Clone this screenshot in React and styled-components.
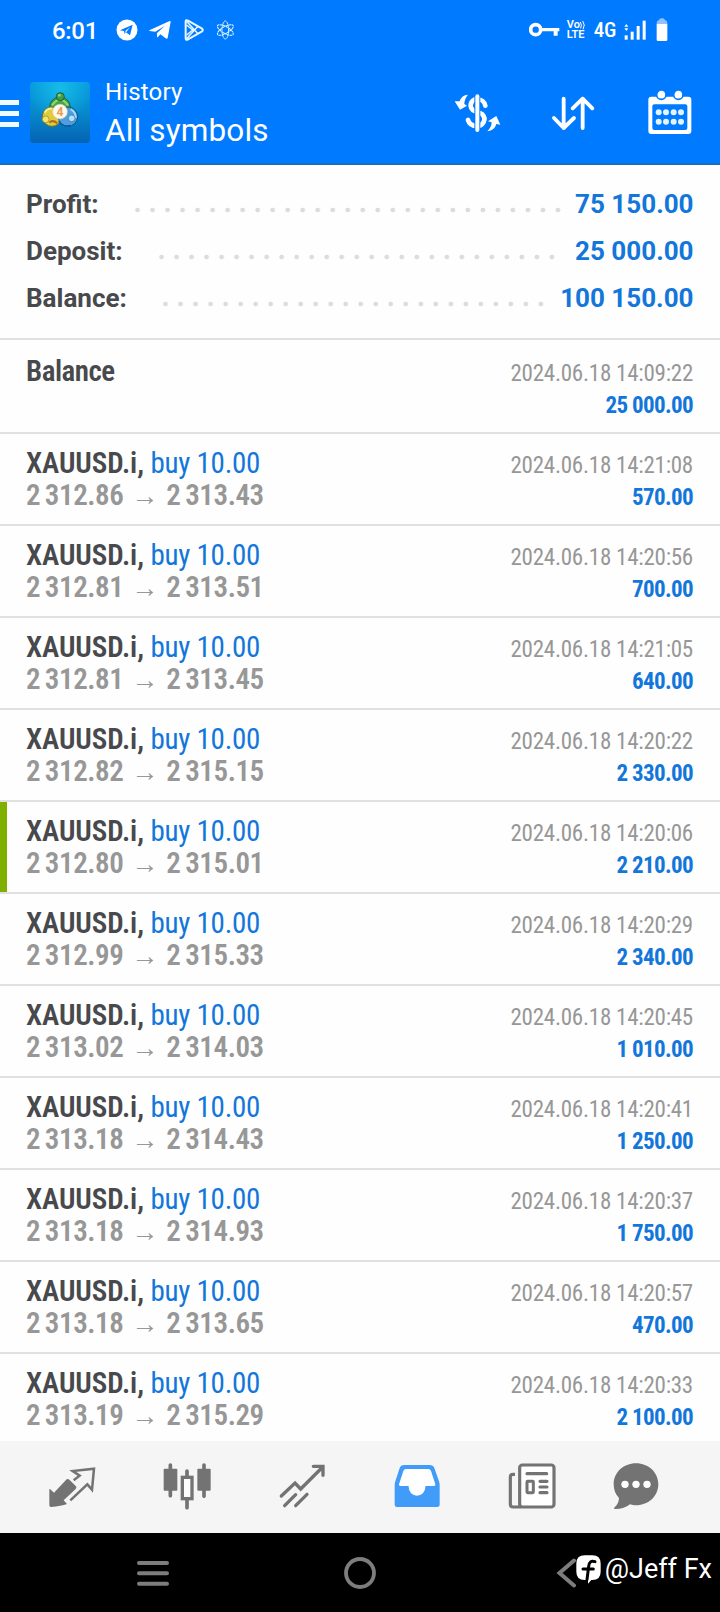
import styled, { createGlobalStyle } from "styled-components"

const summary = [
    { label: "Profit:", value: "75 150.00" },
    { label: "Deposit:", value: "25 000.00" },
    { label: "Balance:", value: "100 150.00" },
]

const deals = [
    { open: "2 312.86", close: "2 313.43", time: "14:21:08", profit: "570.00" },
    { open: "2 312.81", close: "2 313.51", time: "14:20:56", profit: "700.00" },
    { open: "2 312.81", close: "2 313.45", time: "14:21:05", profit: "640.00" },
    { open: "2 312.82", close: "2 315.15", time: "14:20:22", profit: "2 330.00" },
    { open: "2 312.80", close: "2 315.01", time: "14:20:06", profit: "2 210.00", takeProfit: true },
    { open: "2 312.99", close: "2 315.33", time: "14:20:29", profit: "2 340.00" },
    { open: "2 313.02", close: "2 314.03", time: "14:20:45", profit: "1 010.00" },
    { open: "2 313.18", close: "2 314.43", time: "14:20:41", profit: "1 250.00" },
    { open: "2 313.18", close: "2 314.93", time: "14:20:37", profit: "1 750.00" },
    { open: "2 313.18", close: "2 313.65", time: "14:20:57", profit: "470.00" },
    { open: "2 313.19", close: "2 315.29", time: "14:20:33", profit: "2 100.00" },
]

function StatusIcons() {
    return (
        <>
            <StatusIcon $left={20} width="22" height="22" viewBox="0 0 66 66">
                <circle cx="33" cy="33" r="31.5" fill="#fff" />
                <path d="M12 34 L50 17 L42 49 L29 39 L26 45 L24 36 Z" fill="#007aff" />
                <path d="M27 37 L42 25 L31 39 Z" fill="#fff" />
            </StatusIcon>
            <StatusIcon $left={11} width="22" height="20" viewBox="0 0 66 60">
                <path d="M1 31 L62 3 Q65 2 65 6 L56 53 Q55 58 50 55 L34 43 L27 51 Q24 53 24 49 L24 39 L48 17 L19 35 L2 33 Q0 32 1 31 Z" fill="#fff" />
            </StatusIcon>
            <StatusIcon $left={13} width="20" height="22" viewBox="0 0 60 66">
                <g fill="none" stroke="#e9f9ff" strokeWidth="6" strokeLinejoin="round">
                    <path d="M5 8 Q5 1 12 5 L53 28 Q60 33 53 38 L12 61 Q5 65 5 58 Z" />
                    <path d="M7 6 L42 44 M7 60 L42 22 M8 18 L26 33 L8 48" strokeWidth="4.5" />
                </g>
            </StatusIcon>
            <StatusIcon $left={12} width="19" height="20" viewBox="0 0 57 60">
                <g fill="none" stroke="#e9f9ff" strokeWidth="3" strokeDasharray="8 1.5">
                    <ellipse cx="28" cy="30" rx="10" ry="27" />
                    <ellipse cx="28" cy="30" rx="10" ry="27" transform="rotate(60 28 30)" />
                    <ellipse cx="28" cy="30" rx="10" ry="27" transform="rotate(120 28 30)" />
                </g>
            </StatusIcon>
        </>
    )
}

function KeyIcon() {
    return (
        <svg width="31" height="16" viewBox="0 0 93 48">
            <circle cx="20" cy="23" r="15" fill="none" stroke="#fff" strokeWidth="11" />
            <path d="M35 18 H91 V28 H86 V41 H74 V28 H35 Z" fill="#fff" />
        </svg>
    )
}

function WavesIcon() {
    return (
        <svg width="6" height="10" viewBox="0 0 18 30">
            <path d="M1 6 Q7 15 2 25 M8 3 Q17 15 9 28" fill="none" stroke="#fff" strokeWidth="3" />
        </svg>
    )
}

function SignalIcon() {
    return (
        <svg width="23" height="20" viewBox="0 0 69 60">
            <path d="M4 20 L10 12 L16 20 Z M4 25 L10 33 L16 25 Z" fill="#fff" />
            <rect x="5" y="46" width="9" height="13" fill="#fff" />
            <rect x="23" y="35" width="9" height="24" fill="#fff" />
            <rect x="41" y="18" width="9" height="41" fill="#fff" />
            <rect x="59" y="2" width="9" height="57" fill="#fff" />
        </svg>
    )
}

function BatteryIcon() {
    return (
        <svg width="12" height="24" viewBox="0 0 36 72">
            <path d="M10 5 Q10 1 18 1 Q26 1 26 5 L31 8 Q34 9 34 17 H2 Q2 9 5 8 Z" fill="#8ec2ff" />
            <path d="M2 17 H34 V65 Q34 69 30 69 H6 Q2 69 2 65 Z" fill="#fff" />
        </svg>
    )
}

function AppLogo() {
    return (
        <svg width="60" height="61" viewBox="0 0 180 183">
            <defs>
                <linearGradient id="sea" x1="0" y1="0" x2="0" y2="1">
                    <stop offset="0" stopColor="#069ade" />
                    <stop offset="0.5" stopColor="#0788cb" />
                    <stop offset="1" stopColor="#0463b4" />
                </linearGradient>
                <radialGradient id="glow" cx="0.5" cy="0.1" r="0.55">
                    <stop offset="0" stopColor="#16bce8" />
                    <stop offset="1" stopColor="#16bce8" stopOpacity="0" />
                </radialGradient>
            </defs>
            <rect width="180" height="183" rx="11" fill="url(#sea)" />
            <rect width="180" height="183" rx="11" fill="url(#glow)" />
            <circle cx="90" cy="76" r="31" fill="#4aa548" stroke="#1c5f3a" strokeWidth="3" />
            <path d="M66 70 Q90 36 114 70" fill="none" stroke="#9ad66f" strokeWidth="6" />
            <circle cx="66" cy="104" r="29" fill="#e0cb3c" stroke="#6f7420" strokeWidth="3" />
            <path d="M44 92 Q52 78 66 80" fill="none" stroke="#f8ef8f" strokeWidth="6" />
            <circle cx="114" cy="104" r="29" fill="#4d9edb" stroke="#0d4f8c" strokeWidth="3" />
            <path d="M122 82 Q138 90 137 108" fill="none" stroke="#a6dafa" strokeWidth="6" />
            <path d="M58 122 Q68 112 82 124" fill="none" stroke="#b56a24" strokeWidth="6" />
            <path d="M86 118 Q98 136 122 130" fill="none" stroke="#0d5d9e" strokeWidth="4" />
            <circle cx="91" cy="44" r="12" fill="#3f9f4a" stroke="#1c5f3a" strokeWidth="3" />
            <circle cx="88" cy="40" r="4" fill="#9fd77c" />
            <circle cx="47" cy="112" r="10" fill="#f4e571" stroke="#8a8422" strokeWidth="2" />
            <circle cx="125" cy="109" r="10" fill="#b4e0fa" stroke="#2573b5" strokeWidth="2" />
            <circle cx="90" cy="89" r="22" fill="#fffaf0" stroke="#d8d3bd" strokeWidth="2" />
            <text x="90" y="102" textAnchor="middle" fontFamily="Roboto, sans-serif" fontWeight="700" fontSize="37" fill="#f09a4c">4</text>
        </svg>
    )
}

function DollarIcon() {
    return (
        <svg width="48" height="48" viewBox="0 0 144 144">
            <path
                d="M97 50 C94 26 52 22 53 51 C54 70 77 66 88 76 C102 90 90 112 72 111 C56 111 48 103 45 93"
                fill="none" stroke="#fff" strokeWidth="14" strokeLinecap="round"
            />
            <path d="M73 18 V127" stroke="#007aff" strokeWidth="18" />
            <path d="M73 22 V123" stroke="#fff" strokeWidth="12" strokeLinecap="round" />
            <path d="M45 17 Q26 18 20 37 L5 37 L21 62 L42 50 L34 45 Q34 30 45 17 Z" fill="#fff" />
            <path d="M103 127 Q125 124 130 105 L142 107 L130 81 L105 97 L116 100 Q116 114 103 127 Z" fill="#fff" />
        </svg>
    )
}

function SortIcon() {
    return (
        <svg width="48" height="48" viewBox="0 0 144 144">
            <path
                d="M44 29 V117 M15 87 L44 117 L75 87 M101 117 V29 M71 58 L101 29 L130 58"
                fill="none" stroke="#fff" strokeWidth="11.5" strokeLinecap="round" strokeLinejoin="round"
            />
        </svg>
    )
}

function CalendarIcon() {
    return (
        <svg width="48" height="48" viewBox="0 0 144 144">
            <rect x="7" y="23" width="129" height="112" rx="9" fill="#fff" />
            <rect x="19" y="46" width="105" height="77" rx="6" fill="#007aff" />
            <circle cx="46" cy="17" r="14" fill="#fff" stroke="#007aff" strokeWidth="5" />
            <circle cx="97" cy="17" r="14" fill="#fff" stroke="#007aff" strokeWidth="5" />
            {[70, 98].map(y => [38, 60, 83, 105].map(x => <circle key={x} cx={x} cy={y} r="9" fill="#e4f4ff" />))}
        </svg>
    )
}

function QuotesIcon() {
    return (
        <svg width="48" height="48" viewBox="0 0 144 144">
            <path d="M4 82 Q6 80 9 84 L18 92 L56 52 Q60 49 64 53 L84 73 Q87 77 83 81 L47 115 L57 126 Q40 132 9 135 Q4 135 4 130 Z" fill="#737373" />
            <path d="M77 55 L95 41 L74 27 L138 20 L132 83 L118 67 L67 115" fill="none" stroke="#737373" strokeWidth="7.5" />
        </svg>
    )
}

function ChartIcon() {
    return (
        <svg width="48" height="48" viewBox="0 0 144 144">
            <path d="M22 9 V101 M123 9 V103 M72 27 V44 M72 110 V137" stroke="#737373" strokeWidth="11" strokeLinecap="round" />
            <rect x="2" y="20" width="41" height="66" rx="3" fill="#737373" />
            <rect x="103" y="20" width="40" height="66" rx="3" fill="#737373" />
            <rect x="58" y="46" width="29" height="64" fill="#fff" stroke="#737373" strokeWidth="10" />
        </svg>
    )
}

function TradeIcon() {
    return (
        <svg width="48" height="48" viewBox="0 0 144 144">
            <path
                d="M10 102 L51 63 L68 81 L134 15 M106 13 H135 V40 M20 131 L53 98 M53 131 L87 97"
                fill="none" stroke="#737373" strokeWidth="10" strokeLinecap="round"
            />
        </svg>
    )
}

function HistoryIcon() {
    return (
        <svg width="48" height="48" viewBox="0 0 144 144">
            <path d="M34 9 H110 Q121 9 124 18 L138 58 Q140 63 140 70 V128 Q140 135 133 135 H12 Q5 135 5 128 V70 Q5 63 7 58 L20 18 Q23 9 34 9 Z" fill="#419bf9" />
            <path d="M39 21 H106 Q112 21 114 27 L127 67 Q128 72 123 72 H97 V76 A25 25 0 0 1 47 76 V72 H22 Q17 72 18 67 L31 27 Q33 21 39 21 Z" fill="#fff" />
        </svg>
    )
}

function NewsIcon() {
    return (
        <svg width="48" height="48" viewBox="0 0 144 144">
            <g fill="none" stroke="#737373" strokeWidth="9.5">
                <path d="M21 37 H15 Q7 37 7 45 V127 Q7 135 15 135 H40" />
                <rect x="35" y="9" width="103" height="126" rx="8" fill="#fff" />
                <rect x="57" y="58" width="19" height="34" strokeWidth="9" rx="2" />
                <path d="M57 35 H116 M96 58 H117 M96 75 H117 M96 92 H117" strokeLinecap="round" />
            </g>
        </svg>
    )
}

function ChatIcon() {
    return (
        <svg width="48" height="48" viewBox="0 0 144 144">
            <path d="M72 4 C110 4 139 32 139 67 C139 102 110 130 72 130 Q62 130 54 127 Q36 142 7 141 Q5 139 8 136 Q20 126 21 108 Q5 92 5 67 C5 32 34 4 72 4 Z" fill="#737373" />
            {[39, 72, 105].map(x => <circle key={x} cx={x} cy="67" r="11" fill="#fff" />)}
        </svg>
    )
}

function FbBadge() {
    return (
        <svg width="25" height="29" viewBox="0 0 75 87">
            <path d="M26 1 H49 Q74 1 74 26 V50 Q74 75 49 75 H46 L36 86 V75 H26 Q1 75 1 50 V26 Q1 1 26 1 Z" fill="#fff" />
            <path d="M57 20 Q40 14 38 34 L33 74 M21 42 H52" fill="none" stroke="#000" strokeWidth="9" strokeLinecap="round" />
        </svg>
    )
}

function Deal({ deal }) {
    return (
        <Row $marked={deal.takeProfit}>
            <Line>
                <Symbol>XAUUSD.i, <Side>buy 10.00</Side></Symbol>
                <Time>2024.06.18 {deal.time}</Time>
            </Line>
            <Line>
                <Prices>
                    <Price>{deal.open}</Price>
                    <Arrow>→</Arrow>
                    <Price>{deal.close}</Price>
                </Prices>
                <Amount>{deal.profit}</Amount>
            </Line>
        </Row>
    )
}

function App() {
    return (
        <Screen>
            <GlobalStyle />
            <StatusBar>
                <Clock>6:01</Clock>
                <StatusIcons />
                <StatusRight>
                    <KeyIcon />
                    <Volte>
                        <VolteTop>Vo<WavesIcon /></VolteTop>
                        <span>LTE</span>
                    </Volte>
                    <Network>4G</Network>
                    <SignalIcon />
                    <Battery><BatteryIcon /></Battery>
                </StatusRight>
            </StatusBar>
            <Toolbar>
                <MenuBars>
                    <i />
                    <i />
                    <i />
                </MenuBars>
                <AppLogo />
                <Titles>
                    <Subtitle>History</Subtitle>
                    <Title>All symbols</Title>
                </Titles>
                <Action><DollarIcon /></Action>
                <Action><SortIcon /></Action>
                <Action><CalendarIcon /></Action>
            </Toolbar>

            <Summary>
                {summary.map(item => (
                    <SummaryRow key={item.label}>
                        <SummaryLabel>{item.label}</SummaryLabel>
                        <Dots />
                        <SummaryValue>{item.value}</SummaryValue>
                    </SummaryRow>
                ))}
            </Summary>

            <List>
                <Row $first>
                    <Line>
                        <Symbol $tight>Balance</Symbol>
                        <Time>2024.06.18 14:09:22</Time>
                    </Line>
                    <Line>
                        <Prices>&nbsp;</Prices>
                        <Amount>25 000.00</Amount>
                    </Line>
                </Row>
                {deals.map((deal, index) => <Deal key={index} deal={deal} />)}
            </List>

            <TabBar>
                <Tab><QuotesIcon /></Tab>
                <Tab><ChartIcon /></Tab>
                <Tab><TradeIcon /></Tab>
                <Tab><HistoryIcon /></Tab>
                <Tab><NewsIcon /></Tab>
                <Tab $width={92}><ChatIcon /></Tab>
            </TabBar>

            <SystemBar>
                <SystemButton>
                    <svg width="34" height="28" viewBox="0 0 34 28">
                        <path d="M3 4 H31 M3 14.3 H31 M3 24.7 H31" stroke="#7d7d7d" strokeWidth="4" strokeLinecap="round" />
                    </svg>
                </SystemButton>
                <SystemButton>
                    <svg width="34" height="34" viewBox="0 0 34 34">
                        <circle cx="17" cy="17" r="14" fill="none" stroke="#7d7d7d" strokeWidth="3.8" />
                    </svg>
                </SystemButton>
                <SystemButton>
                    <svg width="22" height="30" viewBox="0 0 22 30">
                        <path d="M18 2.5 L3.5 15 L18 27.5" fill="none" stroke="#7d7d7d" strokeWidth="4" strokeLinecap="round" />
                    </svg>
                </SystemButton>
                <Watermark>
                    <FbBadge />
                    <span>@Jeff Fx</span>
                </Watermark>
            </SystemBar>
        </Screen>
    )
}

export default App;

const GlobalStyle = createGlobalStyle`
    body {
        margin: 0;
        background-color: #fff;
        font-family: Roboto, "Liberation Sans", sans-serif;
    }

    svg {
        display: block;
        flex: none;
    }
`

const Screen = styled.div`
    width: 720px;
    height: 1612px;
    display: flex;
    flex-direction: column;
    overflow: hidden;
    background-color: #fefefe;
`

const StatusBar = styled.div`
    height: 62px;
    flex: none;
    box-sizing: border-box;
    display: flex;
    align-items: center;
    padding: 0 52px 2px 52px;
    background-color: #007aff;
    color: #fff;
`

const Clock = styled.span`
    width: 44px;
    font-size: 24px;
    font-weight: 500;
    line-height: 30px;
    padding-top: 1px;
    letter-spacing: -0.3px;
    white-space: nowrap;
`

const StatusIcon = styled.svg`
    margin-left: ${props => props.$left}px;
`

const StatusRight = styled.div`
    margin-left: auto;
    display: flex;
    align-items: center;
    gap: 7px;
`

const Volte = styled.span`
    display: flex;
    flex-direction: column;
    width: 20px;
    font-size: 11px;
    font-weight: 600;
    line-height: 10px;
    white-space: nowrap;
`

const VolteTop = styled.span`
    display: flex;
    align-items: center;
`

const Network = styled.span`
    font-size: 21px;
    font-weight: 500;
    font-stretch: 75%;
    letter-spacing: -0.3px;
`

const Battery = styled.span`
    margin-left: 3px;
`

const Toolbar = styled.div`
    height: 103px;
    flex: none;
    box-sizing: border-box;
    display: flex;
    align-items: center;
    padding-right: 2px;
    background-color: #007aff;
    border-bottom: 2px solid #1b6dc4;
    color: #fff;
`

const MenuBars = styled.div`
    width: 19px;
    margin-right: 11px;
    padding-top: 2px;
    display: flex;
    flex-direction: column;
    gap: 6px;

    i {
        height: 5px;
        background-color: #effaff;
    }
`

const Titles = styled.div`
    flex: 1;
    display: flex;
    flex-direction: column;
    padding: 3px 0 0 15px;
    white-space: nowrap;
`

const Subtitle = styled.span`
    font-size: 24px;
    line-height: 33px;
    letter-spacing: 0.15px;
`

const Title = styled.span`
    font-size: 31.5px;
    line-height: 43px;
    letter-spacing: 0.15px;
`

const Action = styled.div`
    width: 96.5px;
    display: flex;
    justify-content: center;
`

const Summary = styled.div`
    height: 173px;
    flex: none;
    box-sizing: border-box;
    padding: 16px 26.5px 0 26px;
`

const SummaryRow = styled.div`
    height: 47px;
    display: flex;
    align-items: center;
    font-size: 26px;
    font-weight: 700;
    line-height: 47px;
    white-space: nowrap;
`

const SummaryLabel = styled.span`
    color: #48494c;
`

const Dots = styled.div`
    flex: 1;
    height: 6px;
    margin: 10px 12px 0 31px;
    background-image: radial-gradient(circle at center, #dcdcdc 2px, transparent 2.7px);
    background-size: 15.02px 6px;
    background-repeat: repeat-x;
`

const SummaryValue = styled.span`
    color: #1276da;
`

const List = styled.div`
    height: 1103px;
    flex: none;
    overflow: hidden;
`

const Row = styled.div`
    height: ${props => props.$first ? 94 : 92}px;
    box-sizing: border-box;
    border-top: 2px solid #e0e0e0;
    padding: ${props => props.$first ? 15 : 13}px 27px 0 26px;
    background-image: ${props => props.$marked ? "linear-gradient(to right, #7fb000 7.5px, transparent 7.5px)" : "none"};
`

const Line = styled.div`
    height: 32px;
    display: flex;
    justify-content: space-between;
    align-items: baseline;
    line-height: 32px;
    font-stretch: 75%;
    white-space: nowrap;
`

const Symbol = styled.span`
    font-size: 29px;
    font-weight: 600;
    letter-spacing: ${props => props.$tight ? -0.5 : -0.08}px;
    color: #48494c;
`

const Side = styled.span`
    font-weight: 400;
    letter-spacing: -0.25px;
    color: #1276da;
`

const Time = styled.span`
    font-size: 23px;
    letter-spacing: -0.24px;
    color: #979797;
`

const Prices = styled.span`
    font-size: 29px;
    font-weight: 600;
    color: #979797;
`

const Price = styled.span`
    letter-spacing: -0.45px;
    word-spacing: -1.5px;
`

const Arrow = styled.span`
    display: inline-block;
    width: 43px;
    box-sizing: border-box;
    text-align: center;
    font-size: 27px;
    font-weight: 400;
`

const Amount = styled.span`
    font-size: 23px;
    font-weight: 700;
    letter-spacing: -0.65px;
    color: #1276da;
`

const TabBar = styled.div`
    height: 92px;
    flex: none;
    box-sizing: border-box;
    display: flex;
    align-items: center;
    padding: 0 0 2px 14.5px;
    background-color: #f5f5f5;
`

const Tab = styled.div`
    width: ${props => props.$width || 115}px;
    display: flex;
    justify-content: center;
`

const SystemBar = styled.div`
    position: relative;
    height: 79px;
    flex: none;
    display: flex;
    align-items: center;
    justify-content: center;
    background-color: #000;
`

const SystemButton = styled.div`
    width: 207px;
    display: flex;
    justify-content: center;
`

const Watermark = styled.div`
    position: absolute;
    right: 8px;
    top: 20px;
    display: flex;
    align-items: center;
    gap: 4px;
    color: #fff;
    font-size: 27px;
    line-height: 32px;
    white-space: nowrap;
`
